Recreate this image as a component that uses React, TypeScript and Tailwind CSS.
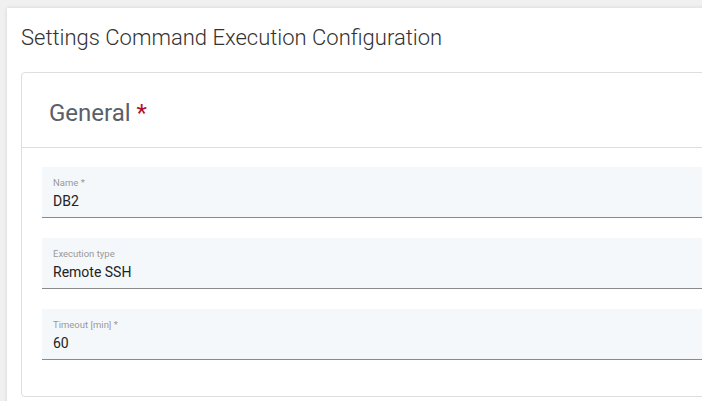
import React from 'react';

const fields = [
  { label: 'Name *', value: 'DB2' },
  { label: 'Execution type', value: 'Remote SSH' },
  { label: 'Timeout [min] *', value: '60' },
];

export default function App() {
  return (
    <div className="h-[401px] w-[702px] overflow-hidden bg-[#f0f0f0] pl-[7px] pt-[8px] font-['Roboto',sans-serif]">
      <div className="h-[420px] w-[720px] bg-white pl-[14px] pt-[19px] shadow-[0_0_4px_rgba(0,0,0,0.12)]">
        <h1 className="text-[22px] font-light leading-[22px] text-[#333]">
          Settings Command Execution Configuration
        </h1>
        <div className="mt-[23px] h-[325px] w-[720px] rounded-[4px] border border-[#dedede]">
          <div className="flex h-[75px] items-center border-b border-[#dedede] pl-[27px] pt-[6px]">
            <span className="text-[24px] leading-none text-[#5b6067]">
              General <span className="text-[#b0102a]">*</span>
            </span>
          </div>
          <div className="flex flex-col gap-[20px] pl-[20px] pt-[19px]">
            {fields.map((f) => (
              <div
                key={f.label}
                className="h-[51px] border-b border-[#8a8a8a] bg-[#f5f8fb] pl-[11px] pt-[10px]"
              >
                <div className="text-[9.5px] leading-[12px] text-[#999]">{f.label}</div>
                <div className="mt-[3px] text-[14px] leading-[18px] text-[#222]">{f.value}</div>
              </div>
            ))}
          </div>
        </div>
      </div>
    </div>
  );
}
